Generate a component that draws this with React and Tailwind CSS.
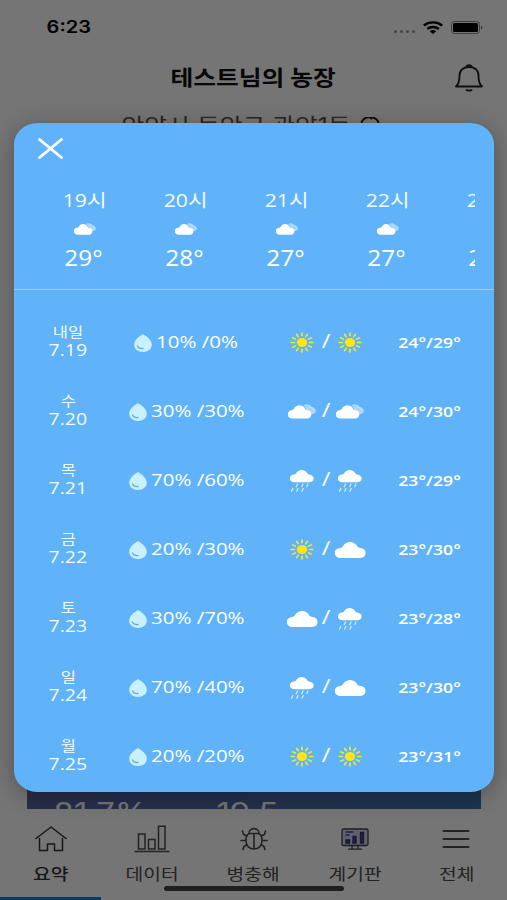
import React from "react";
import clsx from "clsx";

const hours = [
    { time: "19시", temp: "29°" },
    { time: "20시", temp: "28°" },
    { time: "21시", temp: "27°" },
    { time: "22시", temp: "27°" },
    { time: "23시", temp: "26°" },
];

const days = [
    { day: "내일", date: "7.19", rain: "10% /0%", am: "sun", pm: "sun", temp: "24°/29°" },
    { day: "수", date: "7.20", rain: "30% /30%", am: "partly", pm: "partly", temp: "24°/30°" },
    { day: "목", date: "7.21", rain: "70% /60%", am: "rain", pm: "rain", temp: "23°/29°" },
    { day: "금", date: "7.22", rain: "20% /30%", am: "sun", pm: "cloud", temp: "23°/30°" },
    { day: "토", date: "7.23", rain: "30% /70%", am: "cloud", pm: "rain", temp: "23°/28°" },
    { day: "일", date: "7.24", rain: "70% /40%", am: "rain", pm: "cloud", temp: "23°/30°" },
    { day: "월", date: "7.25", rain: "20% /20%", am: "sun", pm: "sun", temp: "23°/31°" },
];

const CLOUD = "M6 20a6 6 0 0 1-.6-12 C7 7.600 7.600 6.800 8.600 4.800a7.600 7.600 0 0 1 13 0 C22.600 6.800 23.600 8 25.500 8.200a5.950 5.950 0 0 1-.5 11.800z";

// wide text used all over the app
function Wide({ className, children }) {
    return (
        <span className={clsx("inline-block whitespace-nowrap", className || "scale-x-[1.18]")}>
            {children}
        </span>
    );
}

function Sun() {
    return (
        <svg viewBox="0 0 24 24" preserveAspectRatio="none" className="w-6 h-[21px]">
            <circle cx="12" cy="12" r="5.200" fill="#ffe70a" />
            {[...Array(12)].map((_, i) => (
                <path
                    key={i}
                    d="M12 1.200v3.200"
                    stroke="#f3e63a"
                    strokeWidth="1.700"
                    strokeLinecap="round"
                    transform={`rotate(${i * 30} 12 12)`}
                />
            ))}
        </svg>
    );
}

function Cloud() {
    return (
        <svg viewBox="0 1 31 19" preserveAspectRatio="none" className="w-[31px] h-4 mt-px">
            <path d={CLOUD} fill="#fff" />
        </svg>
    );
}

function Partly({ className }) {
    return (
        <svg viewBox="0 0 28 15" preserveAspectRatio="none" className={className}>
            <path d="M15.500 1.200C17.500-.2 21.500 0 23 2.600c2.500.4 4.700 2.200 5 4.900L25.500 10H22z" fill="#b5dcfb" />
            <path d="M15.500 2.200c2.500-.4 4.500 1 5.500 2.600 2 .3 4 1.500 5 4" fill="none" stroke="#7dc1fb" strokeWidth=".7" />
            <path d={CLOUD} fill="#fff" transform="translate(0 .4) scale(.765 .71)" />
        </svg>
    );
}

function Rain() {
    return (
        <svg viewBox="0 0 24 22" preserveAspectRatio="none" className="w-6 h-[22px]">
            <path d={CLOUD} fill="#fff" transform="translate(0 -.7) scale(.775 .65)" />
            <path
                d="M7.500 14l-1.300 2.700M13 14l-1.300 2.700M18 14l-1.300 2.700M2.800 18.500l-1.300 2.700M8 18.500l-1.300 2.700M13.200 18.500l-1.300 2.700"
                stroke="#d5edff"
                strokeWidth="1.200"
                strokeLinecap="round"
            />
        </svg>
    );
}

function Drop() {
    return (
        <svg viewBox="0 0 18 18" preserveAspectRatio="none" className="w-[18px] h-[18px] shrink-0">
            <path d="M9 0C11 1.500 17.800 5 17.800 10.800c0 4.500-4 7.200-8.800 7.200S.2 15.300.2 10.800C.2 5 7 1.500 9 0z" fill="#c9f0ff" />
            <path d="M3.500 12c1 2 3.300 2.800 5.500 2.500" fill="none" stroke="#61a9d8" strokeWidth="1.300" strokeLinecap="round" />
        </svg>
    );
}

function WeatherIcon({ type }) {
    return (
        <div className="w-8 h-6 flex items-center justify-center">
            {type === "sun" && <Sun />}
            {type === "cloud" && <Cloud />}
            {type === "rain" && <Rain />}
            {type === "partly" && <Partly className="w-7 h-[15px]" />}
        </div>
    );
}

function HomeIcon() {
    return (
        <svg viewBox="0 0 32 26" className="w-8 h-[26px]" fill="none" stroke="currentColor" strokeWidth="1.500" strokeLinejoin="round" strokeLinecap="round">
            <path d="M1 12.500L16 1l15 11.500M4.500 12.500V24.500h8v-6.500h7v6.500h8V12.500" />
        </svg>
    );
}

function ChartIcon() {
    return (
        <svg viewBox="0 0 36 28" className="w-9 h-7" fill="none" stroke="currentColor" strokeWidth="1.500">
            <path d="M.5 26.500h35M4.500 9H11v15H4.500zM14.500 14.500H21V24h-6.500zM24.500 1.200H31V24h-6.500z" />
        </svg>
    );
}

function BugIcon() {
    return (
        <svg viewBox="0 0 28 26" className="w-7 h-[26px]" fill="none" stroke="currentColor" strokeWidth="1.600" strokeLinecap="round">
            <path d="M6 13c0-3.500 2-5.500 5-5.500h6c3 0 5 2 5 5.500v2c0 5-3.500 8-8 8s-8-3-8-8zM14 8v15M9 7.500c0-6.500 10-6.500 10 0M6 14.500H1M22 14.500h5M7 10L3.500 8.500 2.500 5M21 10l3.500-1.500 1-3.500M7 18.500l-3 2-1 3M21 18.500l3 2 1 3" />
        </svg>
    );
}

function BoardIcon() {
    return (
        <svg viewBox="0 0 28 22" className="w-7 h-[22px]" fill="none" stroke="#414149" strokeWidth="1.300">
            <rect x="1" y="1" width="26" height="16.500" rx="1.500" fill="#d4d4e8" />
            <path d="M11 17.500v3.500M17 17.500v3.500M7 21.200h14" />
            <path d="M4.500 4h8M4.500 7h4" stroke="#42429b" />
            <path d="M5 12h3.500v3H5zM12 8.500h3V15h-3zM19.500 4.500h3V15h-3z" fill="#4b4ba6" stroke="#303078" />
        </svg>
    );
}

function MenuIcon() {
    return (
        <svg viewBox="0 0 28 20" className="w-7 h-5" stroke="currentColor" strokeWidth="2" strokeLinecap="round">
            <path d="M1.500 2h25M1.500 10h25M1.500 18h25" />
        </svg>
    );
}

const tabs = [
    { label: "요약", Icon: HomeIcon },
    { label: "데이터", Icon: ChartIcon },
    { label: "병충해", Icon: BugIcon },
    { label: "계기판", Icon: BoardIcon },
    { label: "전체", Icon: MenuIcon },
];

function StatusBar() {
    return (
        <div className="h-[54px] pl-[50px] pr-[24px] flex items-center justify-between shrink-0">
            <Wide className="text-[17px] font-semibold leading-none scale-x-[1.18]">6:23</Wide>
            <div className="flex items-center gap-2">
                <div className="flex gap-[3px] mt-[8px]">
                    {[0, 1, 2, 3].map((i) => (
                        <i key={i} className="w-[3px] h-[3px] rounded-full bg-[#999]" />
                    ))}
                </div>
                <svg viewBox="0 0 20 13" className="w-5 h-[13px]" fill="none" stroke="#000" strokeWidth="2.400">
                    <path d="M.8 4.500c5-4.200 13.400-4.200 18.400 0M4.200 8c3.300-2.700 8.300-2.700 11.600 0" />
                    <path d="M6.800 10.200c1.800-1.600 4.600-1.600 6.400 0L10 13z" fill="#000" stroke="none" />
                </svg>
                <svg viewBox="0 0 32 13" className="w-8 h-[13px]">
                    <rect x=".5" y=".5" width="28" height="12" rx="3" fill="none" stroke="#888" />
                    <rect x="2" y="2" width="25" height="9" rx="1.500" />
                    <path d="M30 4.500c2 1 2 3 0 4z" fill="#777" />
                </svg>
            </div>
        </div>
    );
}

function WeatherModal() {
    return (
        <div className="absolute top-[123px] left-[14px] w-[480px] h-[669px] rounded-[24px/21px] bg-[#61b3f9] text-white shadow-[0_4px_22px_rgba(0,0,0,0.3)] flex flex-col font-['Open_Sans','Noto_Sans_CJK_KR',sans-serif]">
            <div className="h-[55px] pl-6 pt-[15px] shrink-0">
                <button className="block">
                    <svg viewBox="0 0 25 21" className="w-[25px] h-[21px]" stroke="#fff" strokeWidth="2.900" strokeLinecap="round">
                        <path d="M1.500 1.500l22 18M23.500 1.500l-22 18" />
                    </svg>
                </button>
            </div>
            <div className="h-[111px] ml-5 mr-[19px] overflow-hidden flex shrink-0">
                {hours.map((h) => (
                    <div key={h.time} className="w-[101px] shrink-0 flex flex-col items-center pt-[11px]">
                        <Wide className="text-[18px] h-[22px] leading-[22px] text-white/95 scale-x-[1.18]">{h.time}</Wide>
                        <Partly className="w-[22px] h-[12px] mt-[12px]" />
                        <Wide className="text-[21px] leading-[26px] mt-[10px] scale-x-[1.16] -translate-x-px">{h.temp}</Wide>
                    </div>
                ))}
            </div>
            <div className="border-t border-white/40 pt-[18px]">
                {days.map((d) => (
                    <div key={d.date} className="h-[69px] flex items-center">
                        <div className="w-[108px] flex flex-col items-center -mt-1 text-white/95">
                            <Wide className="text-[14px] leading-[18px] scale-x-[1.18]">{d.day}</Wide>
                            <Wide className="text-[16px] leading-[18px] scale-x-[1.22]">{d.date}</Wide>
                        </div>
                        <div className="w-[130px] flex items-center justify-center">
                            <Drop />
                            <Wide className="text-[16px] leading-5 font-medium ml-1 mr-[21px] -mt-px origin-left scale-x-[1.28]">{d.rain}</Wide>
                        </div>
                        <div className="w-[148px] flex items-center justify-center">
                            <WeatherIcon type={d.am} />
                            <Wide className="w-4 text-center text-[20px] leading-5 -mt-1 scale-x-[1.18]">/</Wide>
                            <WeatherIcon type={d.pm} />
                        </div>
                        <div className="w-[59px] flex justify-center -mt-[2px]">
                            <Wide className="text-[15px] leading-5 font-semibold scale-x-[1.18]">{d.temp}</Wide>
                        </div>
                    </div>
                ))}
            </div>
        </div>
    );
}

export default function App() {
    return (
        <div className="relative w-[507px] h-[900px] overflow-hidden bg-white flex flex-col font-[Inter,'Noto_Sans_CJK_KR',sans-serif]">
            <StatusBar />
            <div className="h-[48px] relative flex items-center justify-center shrink-0">
                <h1 className="text-[21px] font-bold text-[#111]">
                    <Wide>테스트님의 농장</Wide>
                </h1>
                <svg viewBox="0 0 30 28" className="absolute right-[23px] top-[10px] w-[30px] h-[28px]" fill="none" stroke="#222" strokeWidth="1.900" strokeLinejoin="round">
                    <path d="M2 22.500c3-2.500 3.500-6 3.500-11C5.500 6 9.500 3 15 3s9.500 3 9.500 8.500c0 5 .5 8.500 3.500 11zM12.500 3c0-2.500 5-2.500 5 0M12 25.500c1 1.500 5 1.500 6 0" />
                </svg>
            </div>
            <div className="h-[48px] pl-3 flex items-center justify-center gap-[26px] text-[#555] shrink-0">
                <Wide className="text-[21px] scale-x-[1.18]">안양시 동안구 관양1동</Wide>
                <svg viewBox="0 0 20 18" className="w-5 h-[18px]" fill="none" stroke="#222" strokeWidth="2">
                    <path d="M1 8a9 8 0 0 1 18 0M1 11a9 8 0 0 0 18 0M9 0l3 2" />
                </svg>
            </div>
            <div className="flex-1" />
            <div className="ml-[27px] mr-[26px] h-[60px] mb-1 bg-linear-to-r from-[#5864a0] to-[#3f75ae] overflow-hidden text-white text-[27px] flex pt-[44px] shrink-0">
                <div className="w-[146px] text-center">
                    <Wide className="scale-x-[1.22]">81.7%</Wide>
                </div>
                <div className="w-[148px] text-center">
                    <Wide className="scale-x-[1.22]">19.5</Wide>
                </div>
            </div>
            <nav className="h-[87px] bg-white flex relative shrink-0">
                {tabs.map(({ label, Icon }, i) => (
                    <div
                        key={label}
                        className={clsx(
                            "flex-1 flex flex-col items-center border-b-[3px]",
                            i === 0 ? "text-[#333] border-[#0b84d8] font-medium" : "text-[#4c4c4c] border-transparent"
                        )}
                    >
                        <div className="h-[51px] flex items-center">
                            <Icon />
                        </div>
                        <Wide className="text-[16px] leading-5 scale-x-[1.2]">{label}</Wide>
                    </div>
                ))}
                <div className="absolute left-[164px] bottom-[9px] w-[180px] h-[5px] rounded-full bg-[#444]" />
            </nav>

            <div className="absolute inset-0 bg-black/54" />
            <WeatherModal />
        </div>
    );
}
